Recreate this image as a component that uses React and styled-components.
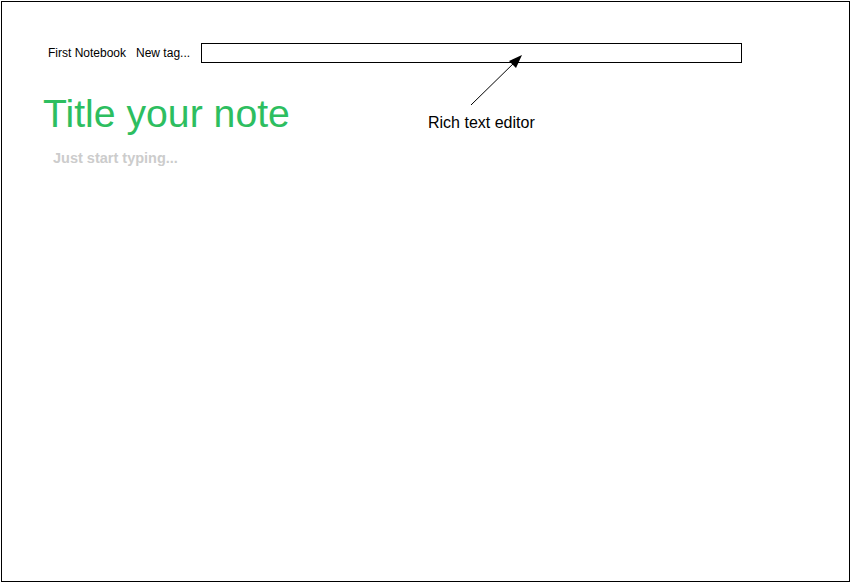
import React from 'react'
import styled, { createGlobalStyle } from 'styled-components'

const GlobalStyle = createGlobalStyle`
    html, body {
        margin: 0;
        padding: 0;
        background: #fff;
    }
    body {
        font-family: "Liberation Sans", Arial, Helvetica, sans-serif;
        color: #000;
    }
`

const Frame = styled.div`
    position: relative;
    box-sizing: border-box;
    width: 849px;
    height: 581px;
    margin: 1px 0 0 1px;
    border: 1px solid #000;
    padding-top: 41px;
`

const Toolbar = styled.div`
    display: flex;
    align-items: center;
    padding-left: 46px;
    gap: 10px;
    font-size: 12px;
`

const TagLabel = styled.span`
    white-space: nowrap;
`

const EditorBox = styled.div`
    box-sizing: border-box;
    width: 541px;
    height: 20px;
    margin-left: 1px;
    border: 1px solid #000;
`

const Title = styled.h1`
    margin: 29px 0 0 41px;
    font-size: 39.2px;
    font-weight: normal;
    line-height: normal;
    color: #2dbe60;
`

const Body = styled.p`
    margin: 14px 0 0 51px;
    font-size: 14.5px;
    font-weight: bold;
    color: #cccccc;
`

const Annotation = styled.div`
    position: absolute;
    left: 426px;
    top: 112px;
    font-size: 16px;
    white-space: nowrap;
`

const Arrow = styled.svg`
    position: absolute;
    left: 0;
    top: 0;
    pointer-events: none;
`

const App = () => (
    <>
        <GlobalStyle />
        <Frame>
            <Toolbar>
                <TagLabel>First Notebook</TagLabel>
                <TagLabel>New tag...</TagLabel>
                <EditorBox />
            </Toolbar>
            <Title>Title your note</Title>
            <Body>Just start typing...</Body>
            <Arrow width="847" height="200" viewBox="0 0 847 200">
                <line x1="469" y1="103" x2="515" y2="58" stroke="#000" strokeWidth="1" />
                <polygon points="520,53 507,59 514,66" fill="#000" />
            </Arrow>
            <Annotation>Rich text editor</Annotation>
        </Frame>
    </>
)

export default App
